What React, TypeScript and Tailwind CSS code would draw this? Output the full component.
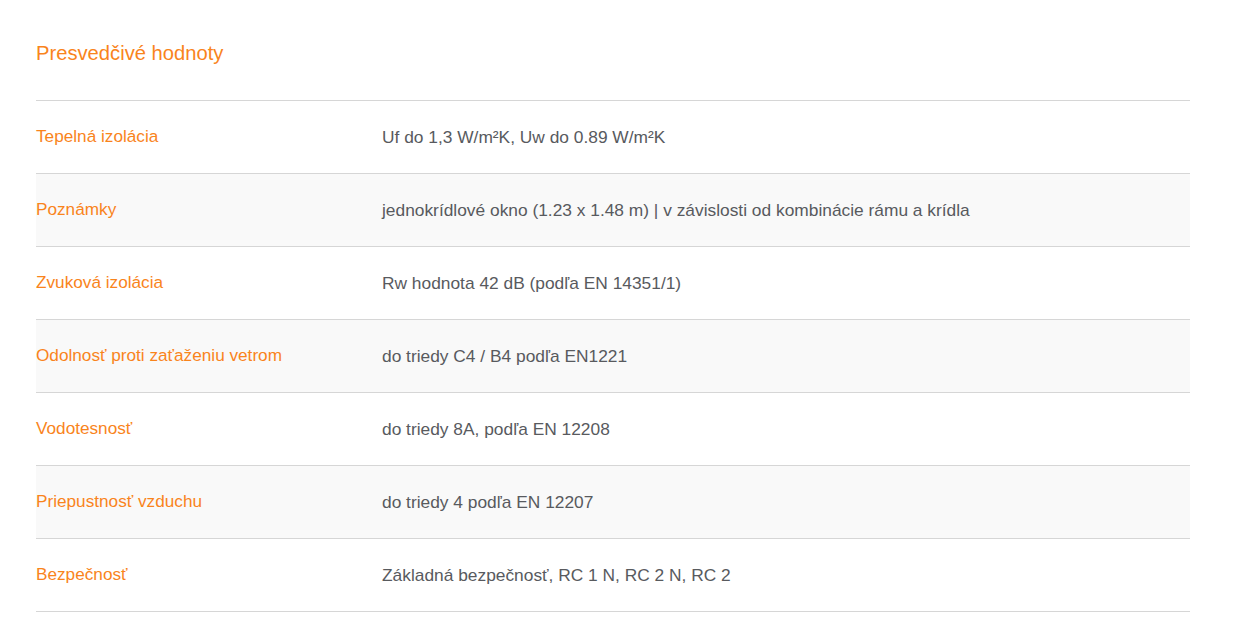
const rows: { label: string; value: string }[] = [
  { label: "Tepelná izolácia", value: "Uf do 1,3 W/m²K, Uw do 0.89 W/m²K" },
  { label: "Poznámky", value: "jednokrídlové okno (1.23 x 1.48 m) | v závislosti od kombinácie rámu a krídla" },
  { label: "Zvuková izolácia", value: "Rw hodnota 42 dB (podľa EN 14351/1)" },
  { label: "Odolnosť proti zaťaženiu vetrom", value: "do triedy C4 / B4 podľa EN1221" },
  { label: "Vodotesnosť", value: "do triedy 8A, podľa EN 12208" },
  { label: "Priepustnosť vzduchu", value: "do triedy 4 podľa EN 12207" },
  { label: "Bezpečnosť", value: "Základná bezpečnosť, RC 1 N, RC 2 N, RC 2" },
];

export default function App() {
  return (
    <div className="w-full min-h-[644px] bg-white [font-family:'Liberation_Sans',Arial,sans-serif]">
      <div className="w-[1154px] ml-[36px] pt-[41px]">
        <h2 className="text-[20.2px] leading-[24px] text-[#f9841c] h-[59px]">Presvedčivé hodnoty</h2>

        <div className="flex flex-col border-b border-[#d6d6d6]">
          {rows.map((r, i) => (
            <div
              key={r.label}
              className={
                "flex items-center h-[73px] border-t border-[#d6d6d6] " +
                (i % 2 === 1 ? "bg-[#f9f9f9]" : "bg-white")
              }
            >
              <div className="w-[346px] text-[17.2px] text-[#f9841c]">{r.label}</div>
              <div className="flex-1 text-[17.35px] text-[#585a5e]">{r.value}</div>
            </div>
          ))}
        </div>
      </div>
    </div>
  );
}
